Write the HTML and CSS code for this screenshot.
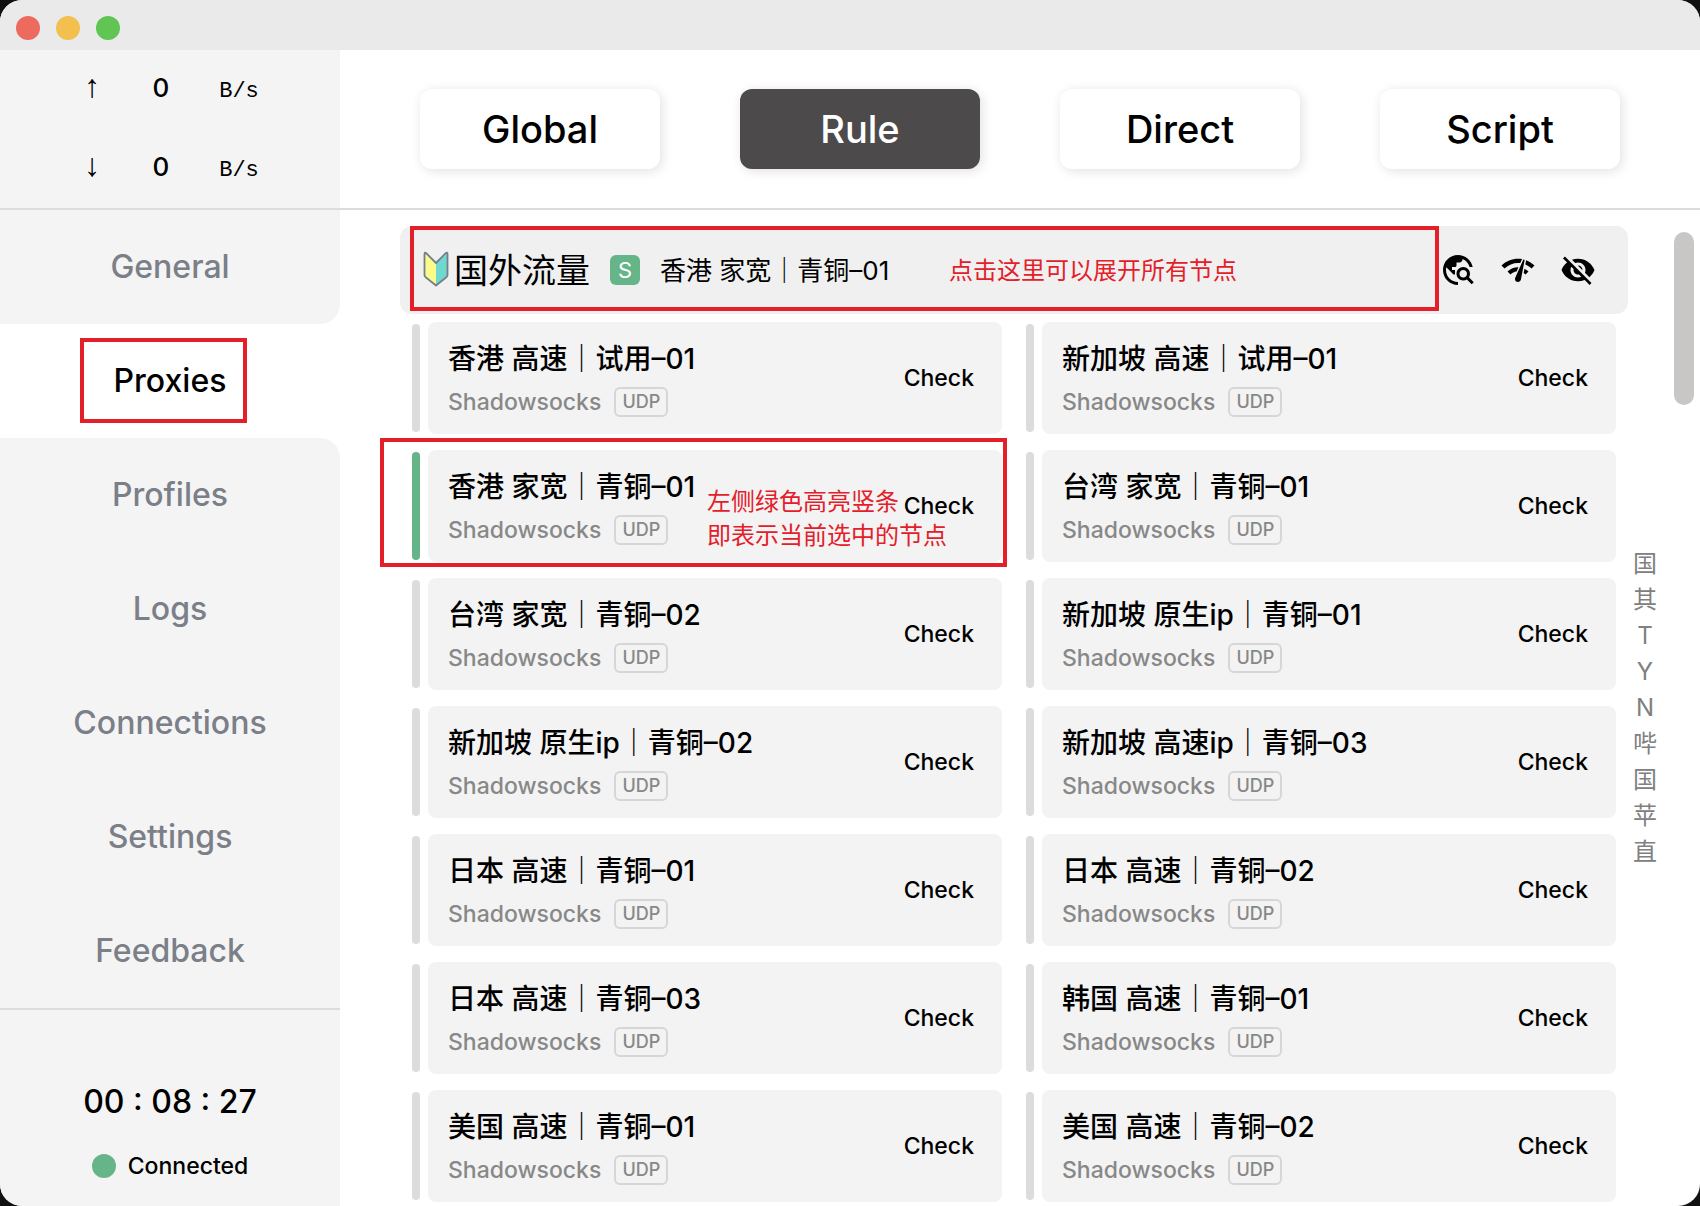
FILE: index.html
```html
<!DOCTYPE html>
<html lang="zh-CN">
<head>
<meta charset="utf-8">
<meta name="viewport" content="width=device-width, initial-scale=1">
<title>Proxies</title>
<link rel="stylesheet" href="styles.css">
</head>
<body>
<div class="window">
  <header class="titlebar">
    <button class="light light-close" aria-label="Close"></button>
    <button class="light light-minimize" aria-label="Minimize"></button>
    <button class="light light-zoom" aria-label="Zoom"></button>
  </header>
  <div class="body">
    <aside class="sidebar">
      <div class="traffic">
        <div class="speed"><span class="arrow">↑</span><span class="value">0</span><span class="unit">B/s</span></div>
        <div class="speed"><span class="arrow">↓</span><span class="value">0</span><span class="unit">B/s</span></div>
      </div>
      <nav class="nav">
        <a class="nav-item before-active" href="#general">General</a>
        <a class="nav-item active" href="#proxies">Proxies<span class="mark mark-nav"></span></a>
        <a class="nav-item after-active" href="#profiles">Profiles</a>
        <a class="nav-item" href="#logs">Logs</a>
        <a class="nav-item" href="#connections">Connections</a>
        <a class="nav-item" href="#settings">Settings</a>
        <a class="nav-item" href="#feedback">Feedback</a>
      </nav>
      <div class="status">
        <div class="timer">00 : 08 : 27</div>
        <div class="connection"><span class="dot"></span>Connected</div>
      </div>
    </aside>
    <main class="main">
      <div class="modes">
        <button class="mode">Global</button>
        <button class="mode selected">Rule</button>
        <button class="mode">Direct</button>
        <button class="mode">Script</button>
      </div>
      <div class="content">
        <section class="group">
          <div class="group-header">
            <svg class="leaf" viewBox="0 0 26 36" aria-hidden="true">
              <path d="M2 3 13 12V34L2 25Z" fill="#fbfb8c"/>
              <path d="M24 3 13 12V34L24 25Z" fill="#6fd8cf"/>
              <path d="M2 2.500Q1.500 1 3 2L13 12 23 2Q24.500 1 24.500 3V24Q24.500 25.500 23 26.500L13 34.500 3 26.500Q1.500 25.500 1.500 24V3Z" fill="none" stroke="#73808a" stroke-width="1.800" stroke-linejoin="round"/>
            </svg>
            <h1 class="group-name">国外流量</h1>
            <span class="badge">S</span>
            <span class="group-now">香港 家宽｜青铜–01</span>
            <div class="tools">
              <button class="tool" aria-label="Find selected"><svg viewBox="0 0 24 24"><path d="M19.300 16.900c.4-.7.7-1.500.7-2.400 0-2.500-2-4.500-4.500-4.500S11 12 11 14.500s2 4.500 4.500 4.500c.9 0 1.700-.3 2.400-.7l3.200 3.200 1.400-1.400-3.200-3.200zm-3.800.1c-1.400 0-2.500-1.100-2.500-2.500s1.100-2.500 2.500-2.500 2.500 1.100 2.500 2.500-1.100 2.500-2.500 2.500zM12 20v2C6.480 22 2 17.520 2 12S6.480 2 12 2c4.840 0 8.870 3.440 9.800 8h-2.070c-.64-2.460-2.400-4.470-4.730-5.410V5c0 1.100-.9 2-2 2h-2v2c0 .55-.45 1-1 1H8v2h2v3H9l-4.790-4.790C4.080 10.790 4 11.380 4 12c0 4.410 3.590 8 8 8z"/></svg></button>
              <button class="tool" aria-label="Test latency"><svg viewBox="0 0 24 24"><path d="M15.900 5c-.17 0-.32.09-.41.23l-.07.15-5.180 11.650c-.16.29-.26.61-.26.96 0 1.110.9 2.010 2.010 2.010.96 0 1.770-.68 1.960-1.590l.01-.03L16.400 5.500c0-.28-.22-.5-.5-.5zM1 9l2 2c2.880-2.880 6.790-4.080 10.530-3.620l1.190-2.680C9.890 3.840 4.740 5.270 1 9zm20 2l2-2c-1.640-1.640-3.550-2.820-5.590-3.570l-.53 2.820c1.500.62 2.900 1.530 4.120 2.750zm-4 4l2-2c-.8-.8-1.700-1.420-2.660-1.890l-.55 2.920c.42.27.83.59 1.210.97zM5 13l2 2c1.130-1.130 2.560-1.790 4.030-2l1.280-2.880c-2.630-.08-5.300.87-7.310 2.880z"/></svg></button>
              <button class="tool" aria-label="Hide timed out"><svg viewBox="0 0 24 24"><path d="M12 7c2.760 0 5 2.240 5 5 0 .65-.13 1.260-.36 1.830l2.920 2.920c1.510-1.260 2.700-2.890 3.430-4.750-1.730-4.390-6-7.500-11-7.500-1.400 0-2.740.25-3.980.7l2.160 2.160C10.740 7.130 11.350 7 12 7zM2 4.270l2.280 2.280.46.46C3.080 8.300 1.780 10.020 1 12c1.730 4.390 6 7.500 11 7.500 1.550 0 3.030-.3 4.380-.84l.42.42L19.730 22 21 20.730 3.270 3 2 4.270zM7.530 9.800l1.550 1.550c-.05.21-.08.43-.08.65 0 1.660 1.340 3 3 3 .22 0 .44-.03.65-.08l1.550 1.550c-.67.33-1.410.53-2.200.53-2.760 0-5-2.240-5-5 0-.79.2-1.530.53-2.200zm4.310-.78l3.150 3.150.02-.16c0-1.660-1.340-3-3-3l-.17.01z"/></svg></button>
            </div>
            <span class="mark mark-group"></span>
            <span class="note note-group">点击这里可以展开所有节点</span>
          </div>
          <ul class="proxies">
            <li class="proxy"><span class="bar"></span><div class="card"><div class="info"><div class="name">香港 高速｜试用–01</div><div class="type">Shadowsocks<span class="tag">UDP</span></div></div><button class="check">Check</button></div></li>
            <li class="proxy"><span class="bar"></span><div class="card"><div class="info"><div class="name">新加坡 高速｜试用–01</div><div class="type">Shadowsocks<span class="tag">UDP</span></div></div><button class="check">Check</button></div></li>
            <li class="proxy current"><span class="bar"></span><div class="card"><div class="info"><div class="name">香港 家宽｜青铜–01</div><div class="type">Shadowsocks<span class="tag">UDP</span></div></div><button class="check">Check</button></div><span class="mark mark-proxy"></span><span class="note note-proxy">左侧绿色高亮竖条<br>即表示当前选中的节点</span></li>
            <li class="proxy"><span class="bar"></span><div class="card"><div class="info"><div class="name">台湾 家宽｜青铜–01</div><div class="type">Shadowsocks<span class="tag">UDP</span></div></div><button class="check">Check</button></div></li>
            <li class="proxy"><span class="bar"></span><div class="card"><div class="info"><div class="name">台湾 家宽｜青铜–02</div><div class="type">Shadowsocks<span class="tag">UDP</span></div></div><button class="check">Check</button></div></li>
            <li class="proxy"><span class="bar"></span><div class="card"><div class="info"><div class="name">新加坡 原生ip｜青铜–01</div><div class="type">Shadowsocks<span class="tag">UDP</span></div></div><button class="check">Check</button></div></li>
            <li class="proxy"><span class="bar"></span><div class="card"><div class="info"><div class="name">新加坡 原生ip｜青铜–02</div><div class="type">Shadowsocks<span class="tag">UDP</span></div></div><button class="check">Check</button></div></li>
            <li class="proxy"><span class="bar"></span><div class="card"><div class="info"><div class="name">新加坡 高速ip｜青铜–03</div><div class="type">Shadowsocks<span class="tag">UDP</span></div></div><button class="check">Check</button></div></li>
            <li class="proxy"><span class="bar"></span><div class="card"><div class="info"><div class="name">日本 高速｜青铜–01</div><div class="type">Shadowsocks<span class="tag">UDP</span></div></div><button class="check">Check</button></div></li>
            <li class="proxy"><span class="bar"></span><div class="card"><div class="info"><div class="name">日本 高速｜青铜–02</div><div class="type">Shadowsocks<span class="tag">UDP</span></div></div><button class="check">Check</button></div></li>
            <li class="proxy"><span class="bar"></span><div class="card"><div class="info"><div class="name">日本 高速｜青铜–03</div><div class="type">Shadowsocks<span class="tag">UDP</span></div></div><button class="check">Check</button></div></li>
            <li class="proxy"><span class="bar"></span><div class="card"><div class="info"><div class="name">韩国 高速｜青铜–01</div><div class="type">Shadowsocks<span class="tag">UDP</span></div></div><button class="check">Check</button></div></li>
            <li class="proxy"><span class="bar"></span><div class="card"><div class="info"><div class="name">美国 高速｜青铜–01</div><div class="type">Shadowsocks<span class="tag">UDP</span></div></div><button class="check">Check</button></div></li>
            <li class="proxy"><span class="bar"></span><div class="card"><div class="info"><div class="name">美国 高速｜青铜–02</div><div class="type">Shadowsocks<span class="tag">UDP</span></div></div><button class="check">Check</button></div></li>
          </ul>
        </section>
        <nav class="index" aria-label="Groups">
          <a href="#g1">国</a><a href="#g2">其</a><a href="#g3">T</a><a href="#g4">Y</a><a href="#g5">N</a><a href="#g6">哔</a><a href="#g7">国</a><a href="#g8">苹</a><a href="#g9">直</a>
        </nav>
        <div class="scroll"><div class="thumb"></div></div>
      </div>
    </main>
  </div>
</div>
</body>
</html>
```

FILE: styles.css
```css
* { box-sizing: border-box; }

body {
  margin: 0;
  background: #111;
  color: #000;
  font-family: Inter, "Noto Sans CJK SC", sans-serif;
  font-weight: 500;
}

button {
  margin: 0;
  padding: 0;
  border: 0;
  background: none;
  color: inherit;
  font: inherit;
}

a { color: inherit; text-decoration: none; }

.window {
  display: flex;
  flex-direction: column;
  min-height: 100vh;
  border-radius: 22px;
  overflow: hidden;
  background: #fff;
}

/* Title bar */
.titlebar {
  display: flex;
  align-items: center;
  gap: 16px;
  height: 50px;
  padding: 6px 16px 0;
  background: #eaeaea;
}
.light { width: 24px; height: 24px; border-radius: 50%; }
.light-close { background: #ec6a5e; }
.light-minimize { background: #f3bf4f; }
.light-zoom { background: #61c554; }

.body { display: flex; flex: 1; }

/* Sidebar */
.sidebar { display: flex; flex-direction: column; width: 340px; }
.traffic {
  height: 160px;
  border-bottom: 2px solid #dcdcdc;
  background: #f4f4f4;
}
.speed {
  display: grid;
  grid-template-columns: 60px 78px 78px;
  justify-content: center;
  align-content: center;
  align-items: baseline;
  height: 79px;
  line-height: 32px;
  text-align: center;
}
.arrow, .unit { font-family: "Liberation Mono", monospace; }
.arrow { font-size: 32px; }
.unit { font-size: 22px; }
.value { font-size: 26px; }

.nav-item {
  display: flex;
  position: relative;
  align-items: center;
  justify-content: center;
  height: 114px;
  padding-bottom: 2px;
  background: #f4f4f4;
  color: #7b7f88;
  font-size: 32px;
}
.before-active { border-bottom-right-radius: 20px; }
.after-active { border-top-right-radius: 20px; }
.active { background: #fff; color: #000; }

.status {
  display: flex;
  flex: 1;
  flex-direction: column;
  align-items: center;
  justify-content: flex-end;
  gap: 28px;
  padding-bottom: 24px;
  border-top: 2px solid #dcdcdc;
  background: #f4f4f4;
}
.timer { font-size: 32px; line-height: 40px; }
.connection {
  display: flex;
  align-items: center;
  gap: 12px;
  font-size: 23px;
  line-height: 32px;
}
.dot { width: 24px; height: 24px; border-radius: 50%; background: #65b589; }

/* Mode switch */
.main { display: flex; flex: 1; flex-direction: column; min-width: 0; }
.modes {
  display: grid;
  grid-template-columns: repeat(4, 1fr);
  gap: 80px;
  height: 160px;
  padding: 39px 80px;
  border-bottom: 2px solid #dcdcdc;
}
.mode {
  height: 80px;
  border-radius: 12px;
  background: #fff;
  box-shadow: 2px 2px 12px rgba(0, 0, 0, 0.12);
  font-size: 38px;
}
.mode.selected { background: #4c4a4b; color: #fff; }

/* Proxy group */
.content { display: flex; flex: 1; padding-left: 60px; }
.group { flex: 1; padding: 16px 0 4px; }
.group-header {
  display: flex;
  position: relative;
  align-items: center;
  height: 88px;
  padding: 0 32px 0 23px;
  border-radius: 12px;
  background: #f0f0f0;
}
.leaf { width: 26px; height: 36px; margin: 0 5px 2px 0; }
.group-name {
  margin: 0 20px 0 0;
  padding-bottom: 4px;
  font-size: 34px;
  font-weight: 400;
}
.badge {
  width: 30px;
  height: 30px;
  margin-right: 20px;
  border-radius: 6px;
  background: #65b589;
  color: #fff;
  font-size: 22px;
  font-weight: 400;
  line-height: 30px;
  text-align: center;
}
.group-now { padding-bottom: 4px; font-size: 26px; font-weight: 400; }
.tools { display: flex; gap: 24px; margin-left: auto; }
.tool { width: 36px; height: 36px; }
.tool svg { display: block; width: 36px; height: 36px; }

.proxies {
  display: grid;
  grid-template-columns: 1fr 1fr;
  gap: 16px 24px;
  margin: 8px 12px 0;
  padding: 0;
  list-style: none;
}
.proxy { display: flex; position: relative; gap: 8px; }
.bar { width: 8px; margin: 2px 0; border-radius: 4px; background: #dcdcdc; }
.current .bar { background: #65b589; }
.card {
  display: flex;
  flex: 1;
  align-items: center;
  justify-content: space-between;
  height: 112px;
  padding: 0 28px 0 20px;
  border-radius: 8px;
  background: #f3f3f3;
}
.name { margin-bottom: 8px; font-size: 28px; line-height: 40px; }
.type {
  display: flex;
  align-items: center;
  gap: 13px;
  color: #888;
  font-size: 23px;
  line-height: 30px;
}
.tag {
  width: 54px;
  height: 30px;
  border: 2px solid #d6d6d6;
  border-radius: 6px;
  font-size: 18px;
  line-height: 26px;
  text-align: center;
}
.check { font-size: 23px; }

/* Group index and scrollbar */
.index {
  display: flex;
  flex-direction: column;
  justify-content: center;
  width: 34px;
  color: #808080;
  font-size: 24px;
  font-weight: 400;
  line-height: 36px;
  text-align: center;
}
.scroll { width: 38px; padding: 22px 6px 0 12px; }
.thumb { height: 173px; border-radius: 10px; background: #c8c7c6; }

/* Annotations laid over the interface */
.mark { position: absolute; border: 4px solid #e3202a; pointer-events: none; }
.mark-nav { top: 14px; left: 80px; width: 167px; height: 85px; }
.mark-group { top: 0; right: 189px; bottom: 3px; left: 10px; }
.mark-proxy { top: -12px; right: -5px; bottom: -5px; left: -32px; }
.note {
  position: absolute;
  color: #e3202a;
  font-size: 24px;
  font-weight: 400;
  line-height: 34px;
}
.note-group { top: 28px; left: 549px; }
.note-proxy { top: 35px; left: 295px; }
```
